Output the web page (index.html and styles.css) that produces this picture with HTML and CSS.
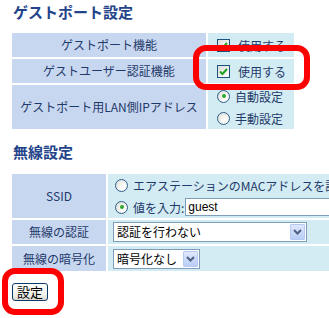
FILE: index.html
```html
<!DOCTYPE html>
<html lang="ja">
<head>
<meta charset="utf-8">
<link rel="stylesheet" href="styles.css">
</head>
<body>
<div class="page">
  <h3 class="title t1">ゲストポート設定</h3>
  <div class="grid g1">
    <div class="lbl">ゲストポート機能</div>
    <div class="val"><span class="cb"><svg viewBox="0 0 11 11" width="11" height="11"><path d="M2 5.5 L4.5 8 L9 3" fill="none" stroke="#21a121" stroke-width="2"/></svg></span><span>使用する</span></div>
    <div class="lbl">ゲストユーザー認証機能</div>
    <div class="val"><span class="cb"><svg viewBox="0 0 11 11" width="11" height="11"><path d="M2 5.5 L4.5 8 L9 3" fill="none" stroke="#21a121" stroke-width="2"/></svg></span><span>使用する</span></div>
    <div class="lbl">ゲストポート用LAN側IPアドレス</div>
    <div class="val col">
      <div class="line"><span class="rd on"></span><span>自動設定</span></div>
      <div class="line"><span class="rd"></span><span>手動設定</span></div>
    </div>
  </div>

  <h3 class="title t2">無線設定</h3>
  <div class="grid g2">
    <div class="lbl">SSID</div>
    <div class="val col">
      <div class="line"><span class="rd"></span><span class="nowrap">エアステーションのMACアドレスを設定</span></div>
      <div class="line"><span class="rd on"></span><span class="nowrap">値を入力:</span><span class="inp">guest</span></div>
    </div>
    <div class="lbl">無線の認証</div>
    <div class="val"><div class="sel wide"><span class="stext">認証を行わない</span><span class="sbtn"><svg viewBox="0 0 9 6" width="9" height="6"><path d="M1 1 L4.5 4.5 L8 1" fill="none" stroke="#4d6185" stroke-width="2"/></svg></span></div></div>
    <div class="lbl">無線の暗号化</div>
    <div class="val"><div class="sel narrow"><span class="stext">暗号化なし</span><span class="sbtn"><svg viewBox="0 0 9 6" width="9" height="6"><path d="M1 1 L4.5 4.5 L8 1" fill="none" stroke="#4d6185" stroke-width="2"/></svg></span></div></div>
  </div>

  <button class="btn">設定</button>

  <div class="mark m1"></div>
  <div class="mark m2"></div>
</div>
</body>
</html>
```

FILE: styles.css
```css
html, body {
  margin: 0;
  padding: 0;
  background: #ffffff;
  overflow: hidden;
  width: 329px;
  height: 318px;
}
.page {
  padding: 2px 0 0 12px;
  font-family: "Noto Sans CJK JP", "Liberation Sans", sans-serif;
  font-size: 12px;
  color: #1f3a6a;
}
.title {
  margin: 0 0 0 1px;
  font-size: 15px;
  line-height: 20px;
  font-weight: bold;
  color: #23438a;
}
.t2 { margin-top: 13px; }
.grid {
  display: grid;
  gap: 2px;
}
.g1 {
  margin-top: 11px;
  grid-template-columns: 194px 86px;
  grid-template-rows: 24px 24px 44px;
}
.g2 {
  margin-top: 12px;
  grid-template-columns: 94px 240px;
  grid-template-rows: 44px 24px 25px;
}
.lbl {
  background: #c8d7f0;
  display: flex;
  align-items: center;
  justify-content: center;
  white-space: nowrap;
  line-height: 16px;
}
.val {
  background: #d3ecf3;
  display: flex;
  align-items: center;
  padding-left: 5px;
  white-space: nowrap;
}
.val.col {
  flex-direction: column;
  align-items: flex-start;
  justify-content: center;
}
.line {
  display: flex;
  align-items: center;
  height: 22px;
}
.cb {
  width: 11px;
  height: 11px;
  border: 1px solid #1c5180;
  background: linear-gradient(135deg, #dcdcd7, #ffffff);
  margin: 0 8px 0 4px;
  display: inline-flex;
}
.rd {
  width: 11px;
  height: 11px;
  border: 1px solid #2e5f8f;
  border-radius: 50%;
  background: radial-gradient(circle at 65% 65%, #ffffff 0, #f4f4f0 40%, #d6d6ce 100%);
  margin: 0 5px 0 4px;
  position: relative;
}
.rd.on::after {
  content: "";
  position: absolute;
  left: 3.5px;
  top: 3.5px;
  width: 4px;
  height: 4px;
  border-radius: 50%;
  background: #2fa72f;
}
.g2 .rd { margin-left: 2px; }
.nowrap { white-space: nowrap; }
.inp {
  margin-left: 1px;
  height: 16px;
  width: 160px;
  border: 1px solid #7f9db9;
  background: #fff;
  color: #000;
  font-family: "Liberation Sans", sans-serif;
  font-size: 12px;
  line-height: 16px;
  padding-left: 2px;
}
.sel {
  height: 18px;
  border: 1px solid #7f9db9;
  background: #fff;
  display: flex;
  align-items: center;
  justify-content: space-between;
  color: #000;
  box-sizing: content-box;
}
.sel.wide { width: 192px; }
.sel.narrow { width: 85px; }
.stext {
  padding-left: 3px;
  line-height: 16px;
}
.sbtn {
  width: 13px;
  height: 14px;
  margin-right: 1px;
  border: 1px solid #b6c9f3;
  border-radius: 1px;
  background: linear-gradient(#dfe8fc, #b9cdf6);
  display: flex;
  align-items: center;
  justify-content: center;
}
.btn {
  display: block;
  margin-top: 12px;
  width: 36px;
  height: 18px;
  padding: 0;
  border: 1px solid #0e3a6a;
  border-radius: 3px;
  background: linear-gradient(#ffffff, #f0f0ea 70%, #d8d8cf);
  font-family: "Noto Sans CJK JP", sans-serif;
  font-size: 13px;
  line-height: 16px;
  color: #000;
}
.mark {
  position: absolute;
  box-sizing: border-box;
  border: 6px solid #ff0000;
  border-radius: 13px;
}
.m1 { left: 193px; top: 45px; width: 117px; height: 45px; }
.m2 { left: 2px; top: 268px; width: 62px; height: 47px; }
```
